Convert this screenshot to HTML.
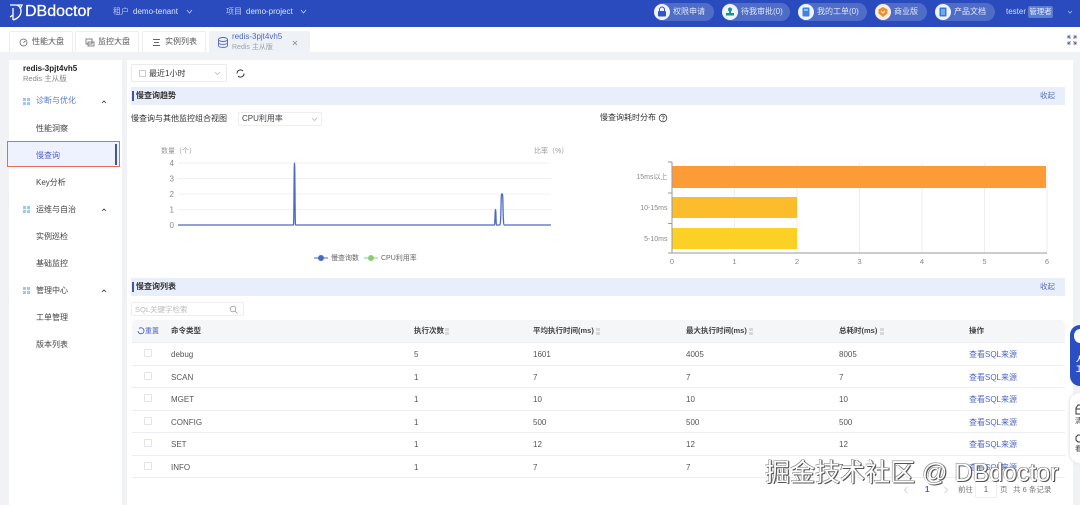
<!DOCTYPE html>
<html lang="zh"><head><meta charset="utf-8"><style>
*{box-sizing:border-box}
html,body{margin:0;padding:0}
body{width:1080px;height:505px;overflow:hidden;position:relative;background:#f0f2f5;font-family:"Liberation Sans","Noto Sans CJK SC",sans-serif;font-size:8px;color:#444;filter:blur(.3px)}
.a{position:absolute;white-space:nowrap;line-height:1}
.b{position:absolute}
.pill{position:absolute;top:3px;height:18px;border-radius:9px;background:#4f6dc6;color:#dfe6f8;font-size:8px;line-height:18px;white-space:nowrap}
.pill svg{position:absolute;left:0;top:1px}
.pill span{position:absolute;left:19px}
.tab{position:absolute;top:31px;height:21px;background:#fff;border:1px solid #eceef2;border-bottom:0;border-radius:2px 2px 0 0;font-size:8px;color:#555;line-height:20px;white-space:nowrap}
.sec{position:absolute;left:131px;width:934px;height:18px;background:#e9eefb}
.sec u{position:absolute;left:1px;top:4px;width:2px;height:10px;background:#3f55b5}
.sec b{position:absolute;left:5px;top:5px;font-size:8px;line-height:1;color:#333;font-weight:700}
.sec em{position:absolute;right:10px;top:5px;font-size:7.5px;line-height:1;font-style:normal;color:#5570c0}
.m{position:absolute;left:36px;font-size:8px;line-height:1;color:#444;white-space:nowrap}
.g{position:absolute;left:23px;width:7px;height:7px;background:
linear-gradient(#9cc8f2,#9cc8f2) 0 0/3px 3px no-repeat,linear-gradient(#9cc8f2,#9cc8f2) 100% 0/3px 3px no-repeat,linear-gradient(#9cc8f2,#9cc8f2) 0 100%/3px 3px no-repeat,linear-gradient(#9cc8f2,#9cc8f2) 100% 100%/3px 3px no-repeat}
.r{position:absolute;left:132px;width:933px;height:22.6px;border-bottom:1px solid #eceef1;background:#fff}
.c{position:absolute;top:8px;font-size:8px;line-height:1;color:#555;white-space:nowrap}
.cb{position:absolute;left:12px;top:6px;width:8px;height:8px;border:1px solid #e2e4e8;border-radius:1px}
.h{position:absolute;top:7px;font-size:7.5px;line-height:1;color:#444;font-weight:700;white-space:nowrap}
.l{color:#5068c0}
.s{position:absolute;top:8px;width:4px;height:7px;background:linear-gradient(#d8d8d8 0 3px,transparent 3px 4px,#d8d8d8 4px)}
.wm{position:absolute;left:765px;top:461px;font-size:25px;line-height:1;color:#fff;white-space:nowrap;font-family:"Liberation Sans","Noto Sans CJK SC",sans-serif;text-shadow:1px 1px 0 #555,-.5px -.5px 0 #777,1px 0 1px #444}
</style></head><body>

<div class="b" style="left:0;top:0;width:1080px;height:27px;background:#2a4bbd"></div>
<svg class="b" style="left:9px;top:4px" width="15" height="17" viewBox="0 0 15 17" fill="none" stroke="#fff" stroke-width="1.3"><path d="M1 1h5c4 0 6 3 6 6 0 5-4 8-8 9M4 4v12M1 13l3-2M8 1l5 0-2 4"/></svg>
<div class="a" style="left:25px;top:4px;font-size:16px;color:#fff;-webkit-text-stroke:.25px #fff">DBdoctor</div>
<div class="a" style="left:113px;top:8px;font-size:8px;color:#b9c6ef">租户</div>
<div class="a" style="left:133px;top:8px;font-size:8px;color:#dbe3fa">demo-tenant</div>
<svg class="b" style="left:186px;top:9px" width="7" height="6" fill="none" stroke="#c8d4f5" stroke-width=".8"><path d="M1 1l2.500 3L6 1"/></svg>
<div class="a" style="left:226px;top:8px;font-size:8px;color:#b9c6ef">项目</div>
<div class="a" style="left:246px;top:8px;font-size:8px;color:#dbe3fa">demo-project</div>
<svg class="b" style="left:300px;top:9px" width="7" height="6" fill="none" stroke="#c8d4f5" stroke-width=".8"><path d="M1 1l2.500 3L6 1"/></svg>

<div class="pill" style="left:654px;width:60px"><svg width="16" height="16"><circle cx="8" cy="8" r="8" fill="#eef3fd"/><path d="M5.500 7V5.500a2.500 2.500 0 0 1 5 0V7" fill="none" stroke="#2f55c8"/><rect x="4" y="7" width="8" height="5.500" rx="1" fill="#2f55c8"/></svg><span>权限申请</span></div>
<div class="pill" style="left:722px;width:68px"><svg width="16" height="16"><circle cx="8" cy="8" r="8" fill="#eef3fd"/><circle cx="8" cy="5.500" r="2" fill="#16958f"/><path d="M7 6.500h2v2.500h3v2.500H4V9h3z" fill="#16958f"/></svg><span>待我审批(0)</span></div>
<div class="pill" style="left:798px;width:69px"><svg width="16" height="16"><circle cx="8" cy="8" r="8" fill="#eef3fd"/><rect x="4.500" y="3.500" width="7" height="9" rx="1" fill="#3f83e0"/><path d="M6 6h4" stroke="#eef3fd"/></svg><span>我的工单(0)</span></div>
<div class="pill" style="left:875px;width:52px"><svg width="16" height="16"><circle cx="8" cy="8" r="8" fill="#fbeee0"/><path d="M8 3l4.500 2.500v4L8 13 3.500 9.500v-4z" fill="#e8912e"/><path d="M6 7l2 2 2-2" fill="none" stroke="#fbeee0"/></svg><span>商业版</span></div>
<div class="pill" style="left:935px;width:60px"><svg width="16" height="16"><circle cx="8" cy="8" r="8" fill="#eef3fd"/><rect x="4.500" y="3.500" width="7" height="9" rx="1" fill="#2f78dc"/><path d="M6 6h4M6 8h4M6 10h4" stroke="#eef3fd" stroke-width=".7"/></svg><span>产品文档</span></div>
<div class="a" style="left:1006px;top:8px;font-size:8px;color:#d5def8">tester</div>
<div class="b" style="left:1028px;top:6px;width:25px;height:12px;background:#5b7ed0;border-radius:2px;color:#e6ecfb;font-size:7.500px;line-height:12px;text-align:center">管理者</div>
<svg class="b" style="left:1067px;top:10px" width="6" height="5" fill="none" stroke="#a9bbef" stroke-width=".8"><path d="M1 1l2 2 2-2"/></svg>

<div class="b" style="left:0;top:27px;width:1080px;height:25px;background:#fff"></div>
<div class="tab" style="left:9px;width:64px"><svg class="b" style="left:9px;top:6px" width="9" height="9" fill="none" stroke="#666" stroke-width=".8"><circle cx="4.500" cy="4.500" r="3.500"/><path d="M4.500 4.500l2-1.500"/></svg><span class="a" style="left:22px;top:6px">性能大盘</span></div>
<div class="tab" style="left:75px;width:64px"><svg class="b" style="left:9px;top:6px" width="10" height="9" fill="none" stroke="#666" stroke-width=".8"><rect x="1" y="1" width="6" height="5"/><rect x="3" y="4" width="6" height="4"/></svg><span class="a" style="left:22px;top:6px">监控大盘</span></div>
<div class="tab" style="left:142px;width:64px"><svg class="b" style="left:9px;top:6px" width="9" height="9" fill="none" stroke="#666"><path d="M1 1.500h7M2 4.500h5M1 7.500h7"/></svg><span class="a" style="left:22px;top:6px">实例列表</span></div>
<div class="b" style="left:209px;top:31px;width:101px;height:21px;background:#eef1f6;border-radius:2px 2px 0 0"></div>
<svg class="b" style="left:217px;top:37px" width="12" height="11" fill="none" stroke="#5068c0" stroke-width=".9"><ellipse cx="6" cy="2.500" rx="4.500" ry="2"/><path d="M1.500 2.500v6c0 2.500 9 2.500 9 0v-6M1.500 5.500c0 2.500 9 2.500 9 0"/></svg>
<div class="a" style="left:232px;top:33px;font-size:8px;color:#4f66c4">redis-3pjt4vh5</div>
<div class="a" style="left:232px;top:44px;font-size:7px;color:#9aa0aa">Redis 主从版</div>
<svg class="b" style="left:292px;top:40px" width="6" height="6" stroke="#888" stroke-width=".8"><path d="M1 1l4 4M5 1L1 5"/></svg>
<svg class="b" style="left:1067px;top:35px" width="10" height="10" fill="none" stroke="#5060a8"><path d="M1 3.500V1h2.500M6.500 1H9v2.500M9 6.500V9H6.500M3.500 9H1V6.500M1 1l2.500 2.500M9 1L6.500 3.500M9 9L6.500 6.500M1 9l2.500-2.500"/></svg>

<div class="b" style="left:9px;top:60px;width:113px;height:445px;background:#fff"></div>
<div class="a" style="left:23px;top:65px;font-size:8px;font-weight:700;color:#222">redis-3pjt4vh5</div>
<div class="a" style="left:23px;top:75px;font-size:7.500px;color:#888">Redis 主从版</div>
<div class="g" style="top:98px"></div><div class="m" style="top:97px;color:#5a7bc8">诊断与优化</div>
<svg class="b" style="left:101px;top:100px" width="6" height="4" fill="none" stroke="#333" stroke-width=".8"><path d="M1 3l2-2 2 2"/></svg>
<div class="m" style="top:125px">性能洞察</div>
<div class="b" style="left:7px;top:141px;width:113px;height:26px;background:#eef2fe;border:1.500px solid #e86a5c"></div>
<div class="b" style="left:115px;top:144px;width:2px;height:21px;background:#3f55a5"></div>
<div class="m" style="top:152px;color:#4f62c8">慢查询</div>
<div class="m" style="top:179px">Key分析</div>
<div class="g" style="top:206px"></div><div class="m" style="top:206px">运维与自治</div>
<svg class="b" style="left:101px;top:208px" width="6" height="4" fill="none" stroke="#333" stroke-width=".8"><path d="M1 3l2-2 2 2"/></svg>
<div class="m" style="top:233px">实例巡检</div>
<div class="m" style="top:260px">基础监控</div>
<div class="g" style="top:287px"></div><div class="m" style="top:287px">管理中心</div>
<svg class="b" style="left:101px;top:289px" width="6" height="4" fill="none" stroke="#333" stroke-width=".8"><path d="M1 3l2-2 2 2"/></svg>
<div class="m" style="top:314px">工单管理</div>
<div class="m" style="top:341px">版本列表</div>

<div class="b" style="left:127px;top:60px;width:946px;height:445px;background:#fff"></div>
<div class="b" style="left:131px;top:64px;width:96px;height:18px;border:1px solid #e8eaee;border-radius:2px"></div>
<div class="b" style="left:139px;top:70px;width:7px;height:7px;border:1px solid #ccc"></div>
<div class="a" style="left:149px;top:70px;font-size:8px;color:#333">最近1小时</div>
<svg class="b" style="left:214px;top:71px" width="7" height="5" fill="none" stroke="#bbb" stroke-width=".8"><path d="M1 1l2.500 2.500L6 1"/></svg>
<svg class="b" style="left:236px;top:69px" width="9" height="9" fill="none" stroke="#333"><path d="M1 4.500a3.500 3.500 0 0 1 6-2.500M8 4.500a3.500 3.500 0 0 1-6 2.500"/></svg>

<div class="sec" style="top:87px"><u></u><b>慢查询趋势</b><em>收起</em></div>
<div class="a" style="left:131px;top:115px;font-size:8px;color:#333">慢查询与其他监控组合视图</div>
<div class="b" style="left:238px;top:112px;width:84px;height:14px;border:1px solid #eceef1;border-radius:2px"></div>
<div class="a" style="left:242px;top:115px;font-size:8px;color:#444">CPU利用率</div>
<svg class="b" style="left:311px;top:117px" width="7" height="5" fill="none" stroke="#bbb" stroke-width=".8"><path d="M1 1l2.500 2.500L6 1"/></svg>

<div class="a" style="left:161px;top:148px;font-size:7px;color:#999">数量（个）</div>
<div class="a" style="left:534px;top:148px;font-size:7px;color:#999">比率（%）</div>
<svg class="b" style="left:160px;top:155px" width="400" height="80">
<g stroke="#eef0f3" stroke-width="1"><path d="M18 8H391M18 23.500H391M18 39H391M18 54.500H391"/></g>
<g font-family="Liberation Sans" font-size="8" fill="#888" text-anchor="end"><text x="14" y="11">4</text><text x="14" y="26.500">3</text><text x="14" y="42">2</text><text x="14" y="57.500">1</text><text x="14" y="73">0</text></g>
<path d="M18 70H133.500C134 70 134 8 134.500 8S135 70 135.500 70H334.500C335 70 335 54.500 335.500 54.500S336 70 336.500 70H340C341 70 341 39 341.500 39H342.500C343 39 343 70 344 70H391" fill="none" stroke="#4d69c6" stroke-width="1.300"/>
</svg>
<svg class="b" style="left:314px;top:253px" width="16" height="10"><path d="M0 5H14" stroke="#4d69c6"/><circle cx="7" cy="5" r="3" fill="#4d69c6"/></svg>
<div class="a" style="left:331px;top:255px;font-size:7px;color:#666">慢查询数</div>
<svg class="b" style="left:364px;top:253px" width="16" height="10"><path d="M0 5H14" stroke="#8ccb7a"/><circle cx="7" cy="5" r="3" fill="#8ccb7a"/></svg>
<div class="a" style="left:381px;top:255px;font-size:7px;color:#666">CPU利用率</div>

<div class="a" style="left:600px;top:114px;font-size:8px;color:#333">慢查询耗时分布</div>
<svg class="b" style="left:658px;top:113px" width="10" height="10" fill="none" stroke="#444" stroke-width=".8"><circle cx="5" cy="5" r="3.800"/><path d="M3.800 4a1.200 1.200 0 1 1 1.800 1.100L5 6M5 6.800v.8"/></svg>
<svg class="b" style="left:620px;top:155px" width="440" height="115">
<g stroke="#eceef1"><path d="M114.500 8V98M177 8V98M239.500 8V98M302 8V98M364.500 8V98M427 8V98"/></g>
<rect x="52" y="11" width="374" height="22" fill="#fd9c36"/>
<rect x="52" y="42" width="125" height="21" fill="#fcbc2c"/>
<rect x="52" y="73" width="125" height="21" fill="#fcd024"/>
<path d="M52 7V98H427M48 7h4M48 38h4M48 68.500h4M48 98h4" fill="none" stroke="#999"/>
<g font-family="Liberation Sans,Noto Sans CJK SC" font-size="7" fill="#888" text-anchor="end"><text x="47.500" y="24">15ms以上</text><text x="47.500" y="55">10-15ms</text><text x="47.500" y="86">5-10ms</text></g>
<g font-family="Liberation Sans" font-size="7.500" fill="#888" text-anchor="middle"><text x="52" y="109">0</text><text x="114.500" y="109">1</text><text x="177" y="109">2</text><text x="239.500" y="109">3</text><text x="302" y="109">4</text><text x="364.500" y="109">5</text><text x="427" y="109">6</text></g>
</svg>

<div class="sec" style="top:278px"><u></u><b>慢查询列表</b><em>收起</em></div>
<div class="b" style="left:131px;top:302px;width:113px;height:14px;border:1px solid #eceef1;border-radius:2px"></div>
<div class="a" style="left:135px;top:306px;font-size:7.500px;color:#bbb">SQL关键字检索</div>
<svg class="b" style="left:229px;top:305px" width="9" height="9" fill="none" stroke="#999" stroke-width=".8"><circle cx="4" cy="4" r="2.800"/><path d="M6 6l2.500 2.500"/></svg>

<div class="b" style="left:132px;top:320px;width:933px;height:23px;background:#f5f6f8;border-bottom:1px solid #eceef1;border-radius:4px 4px 0 0">
<svg class="b" style="left:5px;top:7px" width="8" height="8" fill="none" stroke="#4a62c4" stroke-width=".9"><path d="M2 1.500a3 3 0 1 1-1 2.500"/></svg>
<div class="h" style="left:13px;top:8px;color:#4a62c4;font-weight:400;font-size:7px">重置</div>
<div class="h" style="left:39px">命令类型</div>
<div class="h" style="left:282px">执行次数</div><div class="s" style="left:313px"></div>
<div class="h" style="left:401px">平均执行时间(ms)</div><div class="s" style="left:464px"></div>
<div class="h" style="left:554px">最大执行时间(ms)</div><div class="s" style="left:617px"></div>
<div class="h" style="left:707px">总耗时(ms)</div><div class="s" style="left:748px"></div>
<div class="h" style="left:837px">操作</div>
</div>

<div class="r" style="top:343px"><div class="cb"></div><div class="c" style="left:39px">debug</div><div class="c" style="left:282px">5</div><div class="c" style="left:401px">1601</div><div class="c" style="left:554px">4005</div><div class="c" style="left:707px">8005</div><div class="c l" style="left:837px">查看SQL来源</div></div>
<div class="r" style="top:365.500px"><div class="cb"></div><div class="c" style="left:39px">SCAN</div><div class="c" style="left:282px">1</div><div class="c" style="left:401px">7</div><div class="c" style="left:554px">7</div><div class="c" style="left:707px">7</div><div class="c l" style="left:837px">查看SQL来源</div></div>
<div class="r" style="top:388px"><div class="cb"></div><div class="c" style="left:39px">MGET</div><div class="c" style="left:282px">1</div><div class="c" style="left:401px">10</div><div class="c" style="left:554px">10</div><div class="c" style="left:707px">10</div><div class="c l" style="left:837px">查看SQL来源</div></div>
<div class="r" style="top:410.500px"><div class="cb"></div><div class="c" style="left:39px">CONFIG</div><div class="c" style="left:282px">1</div><div class="c" style="left:401px">500</div><div class="c" style="left:554px">500</div><div class="c" style="left:707px">500</div><div class="c l" style="left:837px">查看SQL来源</div></div>
<div class="r" style="top:433px"><div class="cb"></div><div class="c" style="left:39px">SET</div><div class="c" style="left:282px">1</div><div class="c" style="left:401px">12</div><div class="c" style="left:554px">12</div><div class="c" style="left:707px">12</div><div class="c l" style="left:837px">查看SQL来源</div></div>
<div class="r" style="top:455.500px"><div class="cb"></div><div class="c" style="left:39px">INFO</div><div class="c" style="left:282px">1</div><div class="c" style="left:401px">7</div><div class="c" style="left:554px">7</div><div class="c" style="left:707px">7</div><div class="c l" style="left:837px">查看SQL来源</div></div>

<svg class="b" style="left:903px;top:486px" width="6" height="8" fill="none" stroke="#ccc" stroke-width=".8"><path d="M4.500 1L1.500 4l3 3"/></svg>
<div class="a" style="left:925px;top:486px;font-size:8px;color:#4a62c4;font-weight:700">1</div>
<svg class="b" style="left:943px;top:486px" width="6" height="8" fill="none" stroke="#ccc" stroke-width=".8"><path d="M1.500 1l3 3-3 3"/></svg>
<div class="a" style="left:958px;top:486px;font-size:7.500px;color:#777">前往</div>
<div class="b" style="left:975px;top:481px;width:22px;height:17px;border:1px solid #eceef1;border-radius:2px;font-size:8px;line-height:15px;text-align:center;color:#666">1</div>
<div class="a" style="left:1000px;top:486px;font-size:7.500px;color:#777">页</div>
<div class="a" style="left:1013px;top:486px;font-size:7.500px;color:#777">共 6 条记录</div>

<div class="b" style="left:1070px;top:325px;width:14px;height:61px;background:#2a4fc4;border-radius:10px 0 0 10px"></div>
<div class="b" style="left:1074px;top:329px;width:12px;height:14px;background:#fff;border-radius:50%"></div>
<div class="a" style="left:1076px;top:356px;font-size:7px;color:#fff;font-weight:700">人</div>
<div class="a" style="left:1076px;top:366px;font-size:7px;color:#fff;font-weight:700">卫</div>
<div class="b" style="left:1070px;top:393px;width:14px;height:70px;background:#fff;border-radius:10px 0 0 10px;box-shadow:-1px 0 3px #e4e4e4"></div>
<svg class="b" style="left:1075px;top:403px" width="6" height="12" fill="none" stroke="#333"><path d="M7 2H3L1 5V11H7M1 6H7"/></svg>
<div class="a" style="left:1075px;top:418px;font-size:7px;color:#333">清</div>
<svg class="b" style="left:1075px;top:433px" width="6" height="10" fill="none" stroke="#333"><path d="M7 2H3L1 4V7L3 9H7"/></svg>
<div class="a" style="left:1075px;top:446px;font-size:7px;color:#333">看</div>

<div class="wm">掘金技术社区 @ DBdoctor</div>
</body></html>
